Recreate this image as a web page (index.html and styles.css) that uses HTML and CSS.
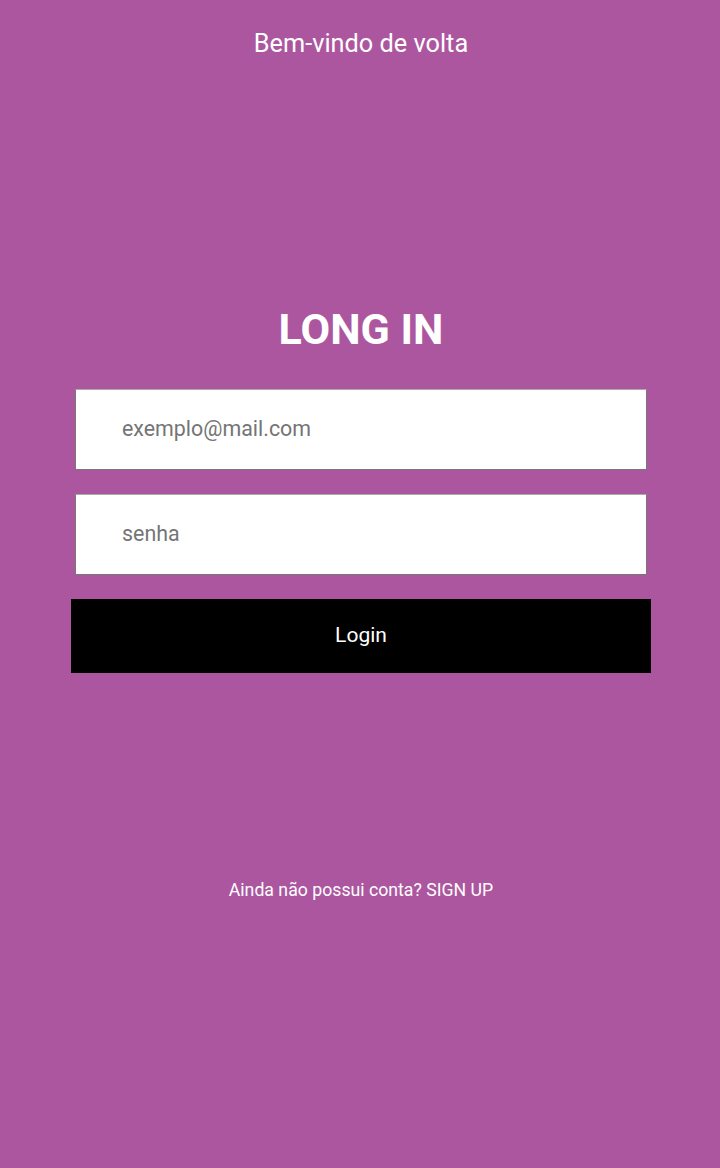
FILE: index.html
```html
<!DOCTYPE html>
<html lang="pt">
<head>
<meta charset="utf-8">
<link rel="stylesheet" href="styles.css">
</head>
<body>
<div class="page">
  <header class="top">Bem-vindo de volta</header>
  <main class="login">
    <h1 class="title">LONG IN</h1>
    <form class="form">
      <input class="field" type="email" placeholder="exemplo@mail.com">
      <input class="field" type="password" placeholder="senha">
      <button class="btn" type="button">Login</button>
    </form>
  </main>
  <p class="signup">Ainda não possui conta? SIGN UP</p>
</div>
</body>
</html>
```
FILE: styles.css
```css
html, body {
  margin: 0;
  padding: 0;
  background: #ad56a0;
  font-family: Roboto, "Liberation Sans", sans-serif;
  color: #fff;
}
.page {
  width: 720px;
  height: 1168px;
  padding-left: 2px;
  box-sizing: border-box;
  display: flex;
  flex-direction: column;
  align-items: center;
}
.top {
  margin-top: 29px;
  font-size: 25.3px;
  line-height: 30px;
}
.login {
  margin-top: 245px;
  display: flex;
  flex-direction: column;
  align-items: center;
}
.title {
  margin: 0;
  font-size: 43px;
  font-weight: 700;
  line-height: 51px;
}
.form {
  margin-top: 34px;
  display: flex;
  flex-direction: column;
  align-items: center;
}
.field {
  box-sizing: border-box;
  width: 572px;
  height: 81px;
  margin-bottom: 24px;
  border: 1px solid #777;
  border-top-color: #aaa;
  background: #fff;
  padding: 0 0 2px 46px;
  font-family: Roboto, "Liberation Sans", sans-serif;
  font-size: 21.4px;
  color: #333;
  outline: none;
}
.field::placeholder {
  color: #757575;
}
.btn {
  width: 580px;
  height: 74px;
  margin-top: 0;
  border: 0;
  padding: 0 0 2px;
  background: #000;
  color: #fff;
  font-family: Roboto, "Liberation Sans", sans-serif;
  font-size: 21px;
}
.signup {
  margin: 206px 0 0;
  font-size: 17.7px;
  line-height: 22px;
}
```
